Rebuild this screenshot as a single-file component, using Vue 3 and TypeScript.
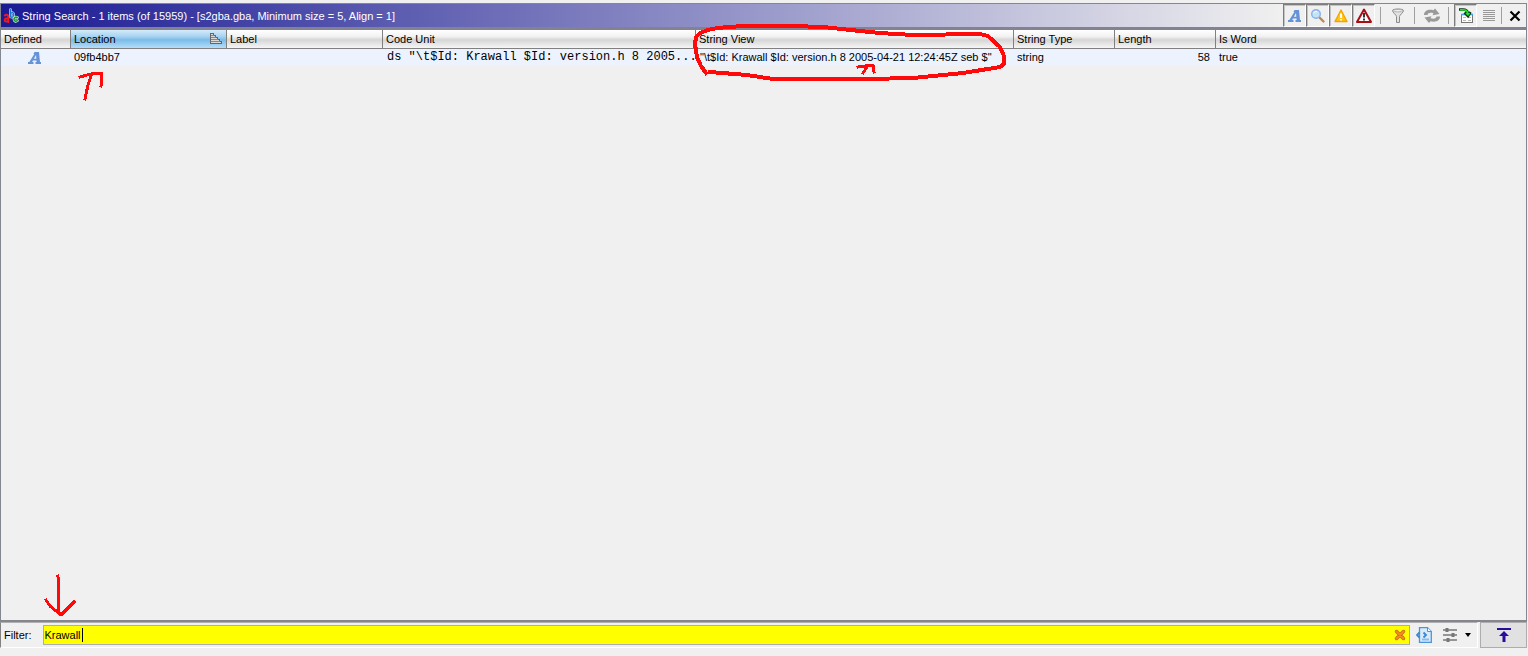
<script setup lang="ts">
import { ref, watch, onMounted } from 'vue'

interface Row {
  location: string
  label: string
  codeUnit: string
  view: string
  type: string
  length: number
  isWord: boolean
}

const title = 'String Search - 1 items (of 15959) - [s2gba.gba, Minimum size = 5, Align = 1]'
const filter = ref('Krawall')
const filterBox = ref<HTMLInputElement | null>(null)
const caretLeft = ref(0)
const rows: Row[] = [
  {
    location: '09fb4bb7',
    label: '',
    codeUnit: 'ds "\\t$Id: Krawall $Id: version.h 8 2005...',
    view: '"\\t$Id: Krawall $Id: version.h 8 2005-04-21 12:24:45Z seb $"',
    type: 'string',
    length: 58,
    isWord: true,
  },
]

// Keeps the caret bar right behind the typed text.
function placeCaret() {
  const box = filterBox.value
  const ctx = document.createElement('canvas').getContext('2d')
  if (!box || !ctx) return
  const style = getComputedStyle(box)
  ctx.font = `${style.fontSize} ${style.fontFamily}`
  caretLeft.value = Math.round(ctx.measureText(filter.value).width) + 2
}

watch(filter, placeCaret)

onMounted(() => {
  placeCaret()
  filterBox.value?.focus()
  filterBox.value?.setSelectionRange(filter.value.length, filter.value.length)
})
</script>

<template>
  <div class="window">
    <section class="panel">
      <header class="titlebar">
        <div class="caption">
          <svg class="logo" width="16" height="16" viewBox="0 0 16 16" aria-hidden="true">
            <g fill="none" stroke-linecap="round">
              <path d="M7.500 1.500V9M7.500 5.500C9 4 10.800 4.500 10.800 6.700C10.800 9 9 10 7.500 8.500" stroke="#b8dcff" stroke-width="2.600" />
              <path d="M7.500 1.500V9M7.500 5.500C9 4 10.800 4.500 10.800 6.700C10.800 9 9 10 7.500 8.500" stroke="#1c6fd0" stroke-width="1.300" />
              <path d="M1.800 7.500C3 6.300 5.300 6.500 5.300 8.500V14M5.300 10.300C3 10 1.600 10.800 1.700 12.300C1.800 14 4.500 14 5.300 12.500" stroke="#f01818" stroke-width="2" />
              <path d="M14.300 9.500C12.500 8.500 11 9.500 11 11.200C11 13.200 13 13.700 14.300 12.700" stroke="#d0ffd0" stroke-width="2.800" />
              <path d="M14.300 9.500C12.500 8.500 11 9.500 11 11.200C11 13.200 13 13.700 14.300 12.700" stroke="#149c30" stroke-width="1.600" />
            </g>
          </svg>
          <h1>{{ title }}</h1>
        </div>
        <div class="tools">
          <button class="tool pressed" aria-label="Show defined strings">
            <svg width="16" height="16" viewBox="0 0 16 16">
              <path fill="#6693d8" fill-rule="evenodd" d="M7.500 2H12L13 12H14V14H8.500V12H9.700L9.500 10.500H5.900L5.200 12H6.500V14H1V12H2.300L7.300 4H6.500ZM9 5L6.900 8.700H9.300Z" />
            </svg>
          </button>
          <button class="tool pressed" aria-label="Show undefined strings">
            <svg width="16" height="16" viewBox="0 0 16 16">
              <path d="M9.500 9.500L13.500 13.500" stroke="#b98a4e" stroke-width="2.400" stroke-linecap="round" />
              <circle cx="6" cy="6" r="4.300" fill="#c5e2fb" stroke="#86b3e6" stroke-width="1.400" />
              <path d="M3.500 5.500C4 4 5.500 3.300 7 3.600" stroke="#fff" fill="none" />
            </svg>
          </button>
          <button class="tool pressed" aria-label="Show partially defined strings">
            <svg width="16" height="16" viewBox="0 0 16 16">
              <path d="M8 2L14 13.500H2Z" fill="#ffc61a" stroke="#f3a500" stroke-width="1.400" stroke-linejoin="round" />
              <path d="M8 5.500V10M8 11V12.500" stroke="#fff" stroke-width="2" />
            </svg>
          </button>
          <button class="tool pressed" aria-label="Show conflicting strings">
            <svg width="16" height="16" viewBox="0 0 16 16">
              <path d="M8 1.500L15 14H1Z" fill="#fff" stroke="#a80d16" stroke-width="2" stroke-linejoin="round" />
              <path d="M8 5V9.500M8 10.500V12.500" stroke="#222" stroke-width="1.800" />
            </svg>
          </button>
          <span class="sep"></span>
          <button class="tool" aria-label="Filter options">
            <svg width="16" height="16" viewBox="0 0 16 16">
              <path d="M2.500 2.500C2.500 0.500 13.500 0.500 13.500 2.500C13.500 4.500 9.500 7 9.500 8.500V14.500H6.500V8.500C6.500 7 2.500 4.500 2.500 2.500Z" fill="#e2e2e2" stroke="#8b8b8b" />
              <ellipse cx="8" cy="2.700" rx="4.500" ry="1.200" fill="#f8f8f8" stroke="#a0a0a0" stroke-width="0.800" />
            </svg>
          </button>
          <span class="sep"></span>
          <button class="tool" aria-label="Refresh">
            <svg width="18" height="16" viewBox="0 0 18 16">
              <path d="M1 7C1 3 5 0.800 10.500 2.200L12 0.500L16.500 6L9.500 7.300L10.500 5.300C7.500 4.300 5 4.800 4.500 7ZM17 8.500C17 12.500 13 14.700 7.500 13.300L6 15L1.500 9.500L8.500 8.200L7.500 10.200C10.500 11.200 13 10.700 13.500 8.500Z" fill="#999" />
            </svg>
          </button>
          <span class="sep"></span>
          <button class="tool pressed" aria-label="Select in listing">
            <svg width="16" height="16" viewBox="0 0 16 16">
              <rect x="3.500" y="6.500" width="11" height="8" fill="#fff" stroke="#777" />
              <path d="M3 6.500H15" stroke="#3b9ff8" stroke-width="1.600" />
              <path d="M5 9.500H8M10 9.500H13M5 12.500H8M10 12.500H13" stroke="#b8b8b8" />
              <path d="M1 1.500H5C8 1.500 9.500 3 9.800 5M6.500 4.500L10 8.200L12.500 4" fill="none" stroke="#0a3a0a" stroke-width="2.600" />
              <path d="M2 1.800H5C8 1.800 9.500 3 9.800 5.500M8 5L10 7L11.500 5" fill="none" stroke="#16e62a" stroke-width="1.400" />
            </svg>
          </button>
          <button class="tool" aria-label="Menu">
            <svg width="16" height="16" viewBox="0 0 16 16" shape-rendering="crispEdges">
              <path d="M2 2.500H14M2 4.500H14M2 6.500H14M2 8.500H14M2 10.500H14M2 12.500H14" stroke="#999" />
            </svg>
          </button>
          <span class="sep tight"></span>
          <button class="tool" aria-label="Close">
            <svg width="16" height="16" viewBox="0 0 16 16">
              <path d="M3.500 3.500L12.500 12.500M12.500 3.500L3.500 12.500" stroke="#000" stroke-width="2.200" />
            </svg>
          </button>
        </div>
      </header>

      <div class="results">
        <table>
          <colgroup>
            <col class="c-defined" />
            <col class="c-medium" />
            <col class="c-medium" />
            <col class="c-unit" />
            <col class="c-view" />
            <col class="c-small" />
            <col class="c-small" />
            <col />
          </colgroup>
          <thead>
            <tr>
              <th scope="col">Defined</th>
              <th scope="col" class="sorted" aria-sort="ascending">
                <span class="sort-head">
                  Location
                  <svg width="14" height="12" viewBox="0 0 14 12" shape-rendering="crispEdges" aria-hidden="true">
                    <path d="M1.500 0.500H4.500V2.500H6.500V4.500H8.500V6.500H10.500V8.500H12.500V10.500H1.500Z" fill="#d8d8d8" stroke="#666" />
                    <path d="M2 2.500H5M2 4.500H7M2 6.500H9M2 8.500H11" stroke="#888" />
                  </svg>
                </span>
              </th>
              <th scope="col">Label</th>
              <th scope="col">Code Unit</th>
              <th scope="col">String View</th>
              <th scope="col">String Type</th>
              <th scope="col">Length</th>
              <th scope="col">Is Word</th>
            </tr>
          </thead>
          <tbody>
            <tr v-for="row in rows" :key="row.location">
              <td class="icon-cell">
                <svg width="16" height="16" viewBox="0 0 16 16" role="img" aria-label="Defined">
                  <path fill="#6693d8" fill-rule="evenodd" d="M7.500 2H12L13 12H14V14H8.500V12H9.700L9.500 10.500H5.900L5.200 12H6.500V14H1V12H2.300L7.300 4H6.500ZM9 5L6.900 8.700H9.300Z" />
                </svg>
              </td>
              <td>{{ row.location }}</td>
              <td>{{ row.label }}</td>
              <td class="mono">{{ row.codeUnit }}</td>
              <td class="view">{{ row.view }}</td>
              <td>{{ row.type }}</td>
              <td class="num">{{ row.length }}</td>
              <td>{{ row.isWord }}</td>
            </tr>
          </tbody>
        </table>
        <svg class="marks" width="1020" height="80" viewBox="0 0 1020 80" aria-hidden="true">
          <path class="ring" d="M705 43L700 36L696 27L694 14L695 7L699 3L707 0L716 -2L742 -4L792 -4L822 -3L859 1L879 3L912 5L979 4L987 6L999 17L1003 26L1003 34L999 37L962 43L912 48L866 49L772 49L746 45L709 42" />
          <path d="M79 47L90 44L101 43L100 56M90 46L87 55L84 69" />
          <path d="M857 37L872 35L873 42M866 37L862 43" />
        </svg>
      </div>
    </section>

    <footer class="filterbar">
      <div class="filter">
        <label for="filter">Filter:</label>
        <div class="field">
          <input id="filter" ref="filterBox" v-model="filter" type="text" spellcheck="false" autocomplete="off" />
          <span class="caret" :style="{ left: caretLeft + 'px' }"></span>
          <button class="clear" aria-label="Clear filter" @click="filter = ''">
            <svg width="12" height="12" viewBox="0 0 12 12">
              <path d="M2.500 2.500L9.500 9.500M9.500 2.500L2.500 9.500" stroke="#c46a10" stroke-width="3.400" stroke-linecap="round" />
              <path d="M2.500 2.500L9.500 9.500M9.500 2.500L2.500 9.500" stroke="#f58a20" stroke-width="2" stroke-linecap="round" />
            </svg>
          </button>
        </div>
        <button class="small" aria-label="Filter settings">
          <svg width="16" height="16" viewBox="0 0 16 16">
            <path d="M3.500 0.700H11.500L15.300 4.500V15.300H3.500Z" fill="#d8ebfb" stroke="#4d94d6" stroke-width="1.300" />
            <path d="M11.500 0.700V4.500H15.300" fill="#fff" stroke="#4d94d6" />
            <path d="M6 12.500H13" stroke="#8cbce8" stroke-width="2" />
            <path d="M3.500 5.500L1 8L3.500 10.500M7.500 5.500L10 8L7.500 10.500" fill="none" stroke="#3a87d0" stroke-width="1.800" />
          </svg>
        </button>
        <button class="small columns" aria-label="Column filters">
          <svg width="16" height="16" viewBox="0 0 16 16">
            <path d="M1 3H15M1 8H15M1 13H15" stroke="#777" stroke-width="1.600" />
            <path d="M5 1V5M11 6V10M6 11V15" stroke="#777" stroke-width="3" />
          </svg>
        </button>
        <button class="arrow" aria-label="Filter history">
          <svg width="6" height="4" viewBox="0 0 6 4"><path d="M0 0H6L3 4Z" /></svg>
        </button>
      </div>
      <button class="top" aria-label="Scroll to top">
        <svg width="16" height="16" viewBox="0 0 16 16">
          <path d="M1 1H15V3H1ZM8 4L13 9H9.500V15H6.500V9H3Z" fill="#2d0a9e" />
        </svg>
      </button>
      <svg class="pointer" width="40" height="50" viewBox="0 0 40 50" aria-hidden="true">
        <path d="M18 6L19 42M6 30L10 36L21 45L34 32" />
      </svg>
    </footer>
  </div>
</template>

<style>
html,
body {
  margin: 0;
  background: #f0f0f0;
}
</style>

<style scoped>
.window {
  box-sizing: border-box;
  min-height: 100vh;
  padding: 3px 1px 8px 0;
  display: flex;
  flex-direction: column;
  background: #f0f0f0;
  color: #000;
  font-family: Tahoma, "Liberation Sans", sans-serif;
  font-size: 11px;
  line-height: 16px;
}

button {
  margin: 0;
  padding: 0;
  border: 0;
  background: none;
  display: flex;
  align-items: center;
  justify-content: center;
  flex: none;
}

.panel {
  flex: 1;
  display: flex;
  flex-direction: column;
  border: 1px solid #828790;
  border-bottom: 2px solid #86868e;
}

.titlebar {
  display: flex;
  height: 23px;
  border-bottom: 3px solid #828290;
}

.caption {
  flex: 1;
  min-width: 0;
  display: flex;
  align-items: center;
  gap: 3px;
  padding-left: 2px;
  background: linear-gradient(to right, #1a1a94, #f0f0f0);
}

h1 {
  margin: 0;
  color: #fff;
  font-size: 11px;
  font-weight: 400;
  white-space: nowrap;
}

.tools {
  display: flex;
  align-items: center;
  background: #f0f0f0;
}

.tool {
  box-sizing: border-box;
  width: 23px;
  height: 23px;
}

.pressed {
  border: 1px solid;
  border-color: #7c7c7c #fff #fff #7c7c7c;
  box-shadow: inset 1px 1px #c4c4c4;
}

.sep {
  width: 1px;
  height: 17px;
  margin: 0 5px;
  background: #a0a0a0;
}

.sep.tight {
  margin: 0 1px;
}

.results {
  flex: 1;
  position: relative;
}

table {
  width: 100%;
  table-layout: fixed;
  border-collapse: separate;
  border-spacing: 0;
}

.c-defined {
  width: 70px;
}

.c-medium {
  width: 156px;
}

.c-unit {
  width: 313px;
}

.c-view {
  width: 318px;
}

.c-small {
  width: 101px;
}

th {
  height: 18px;
  padding: 0 3px;
  border-right: 1px solid #808080;
  border-bottom: 1px solid #808080;
  background: linear-gradient(#fff, #f2f2f2 35%, #d6d6d6 55%, #f6f6f6);
  font-weight: 400;
  line-height: 18px;
  text-align: left;
  white-space: nowrap;
}

th:last-child {
  border-right: 0;
}

.sorted {
  background: linear-gradient(#d4eaf9, #a8d4f2 35%, #7bbbe9 55%, #b4def8);
}

.sort-head {
  display: flex;
  align-items: center;
  justify-content: space-between;
}

td {
  height: 17px;
  padding: 0 3px;
  background: #edf3fe;
  line-height: 17px;
  white-space: nowrap;
}

.icon-cell {
  padding: 0 3px 0 0;
}

.icon-cell svg {
  display: block;
  margin: 0 auto;
}

.mono {
  padding: 0 0 0 4px;
  font-family: "Liberation Mono", monospace;
  font-size: 12px;
}

.view {
  padding-left: 4px;
}

.num {
  padding-right: 6px;
  text-align: right;
}

.marks,
.pointer {
  position: absolute;
  left: 0;
  overflow: visible;
  pointer-events: none;
}

.marks {
  top: 0;
}

.marks path,
.pointer path {
  fill: none;
  stroke: #ff0a0a;
  stroke-width: 3px;
  stroke-linecap: square;
  stroke-linejoin: round;
  shape-rendering: crispEdges;
}

.marks .ring {
  stroke-width: 4px;
}

.filterbar {
  position: relative;
  display: flex;
  gap: 2px;
  height: 26px;
}

.filter {
  box-sizing: border-box;
  flex: 1;
  display: flex;
  align-items: center;
  padding: 0 1px 0 3px;
  border: 1px solid #828282;
  border-top-color: #b0b0b0;
  border-right: 1px solid #fff;
  border-bottom: 1px solid #fff;
}

.field {
  position: relative;
  flex: 1;
  display: flex;
  align-items: center;
  box-sizing: border-box;
  height: 20px;
  margin: 0 6px 0 11px;
  padding-right: 3px;
  border: 1px solid #abadb3;
  background: #ff0;
}

input {
  flex: 1;
  min-width: 0;
  padding: 0 0 0 1px;
  border: 0;
  outline: 0;
  background: transparent;
  color: #000;
  caret-color: transparent;
  font: inherit;
}

.caret {
  position: absolute;
  top: 2px;
  width: 1px;
  height: 14px;
  background: #000;
}

.small {
  width: 16px;
  height: 20px;
  margin-right: 10px;
}

.columns {
  margin-right: 6px;
}

.arrow {
  width: 8px;
  height: 20px;
  margin-right: 4px;
}

.top {
  box-sizing: border-box;
  width: 47px;
  border: 1px solid #adadad;
  background: #e1e1e1;
}

.pointer {
  left: 40px;
  bottom: 28px;
}
</style>
